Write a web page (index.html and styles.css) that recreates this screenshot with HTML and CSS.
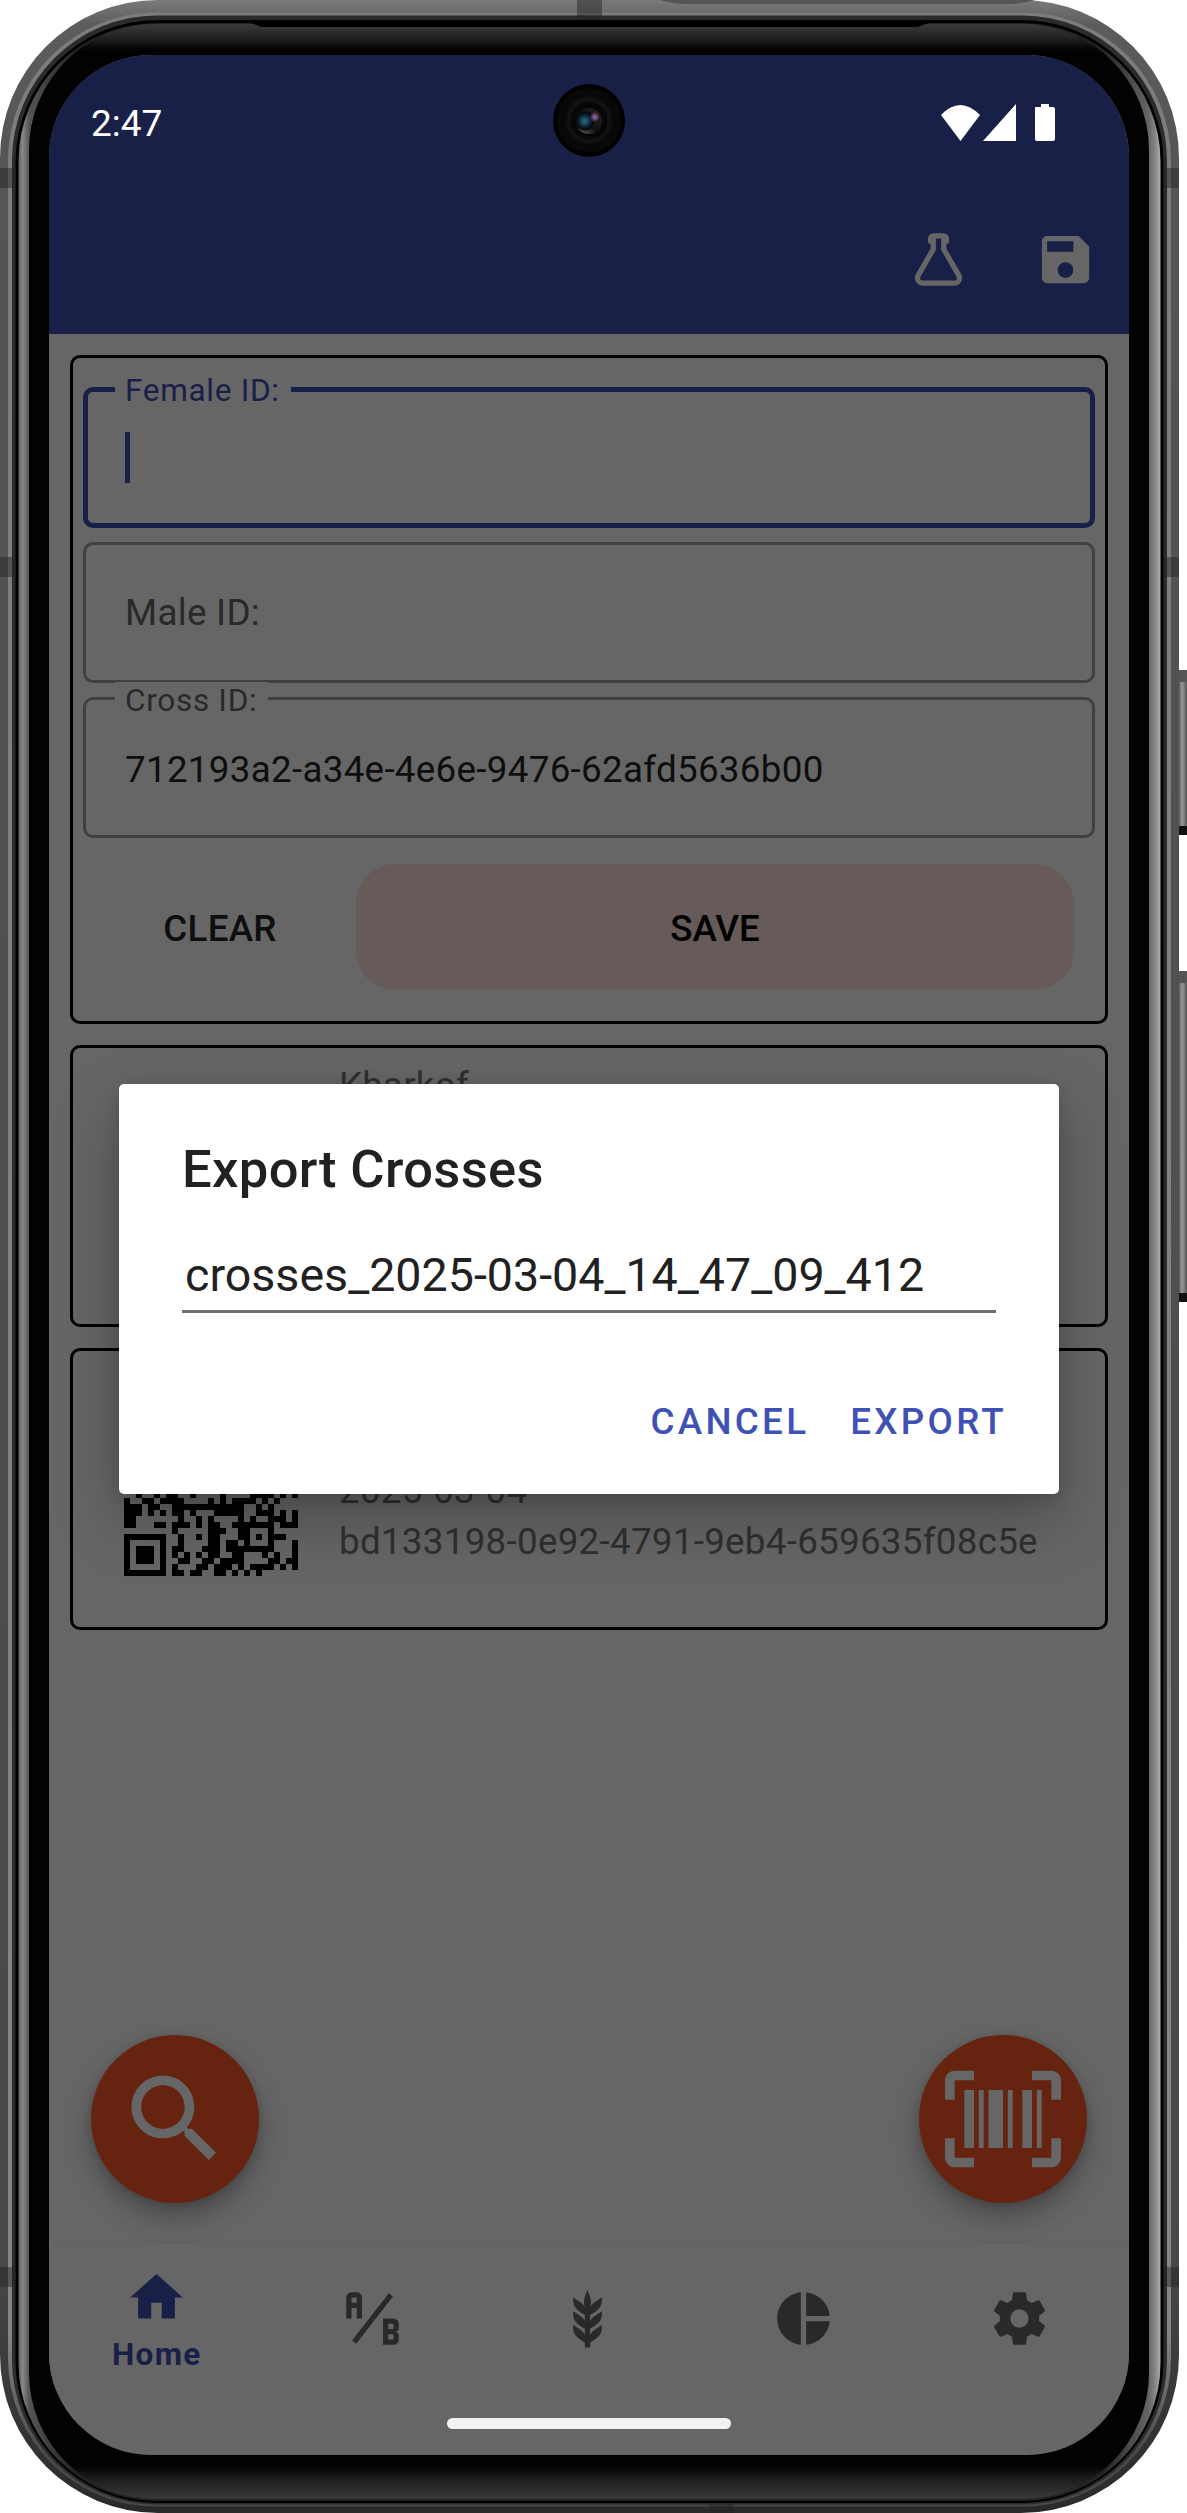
FILE: index.html
```html
<!DOCTYPE html>
<html lang="en">
<head>
<meta charset="utf-8">
<title>Crosses</title>
<link rel="stylesheet" href="styles.css">
</head>
<body>
<div class="device">
  <svg class="frame" viewBox="0 0 1187 2513" aria-hidden="true">
    <defs>
      <linearGradient id="shell" x1="0" y1="0" x2="0" y2="1">
        <stop offset="0" stop-color="#7a7a7a"/><stop offset=".01" stop-color="#5c5c5c"/><stop offset=".06" stop-color="#555"/><stop offset=".9" stop-color="#484848"/><stop offset="1" stop-color="#2a2a2a"/>
      </linearGradient>
      <linearGradient id="line" x1="0" y1="0" x2="0" y2="1">
        <stop offset="0" stop-color="#7c7c7c"/><stop offset=".93" stop-color="#868686"/><stop offset=".98" stop-color="#484848"/>
      </linearGradient>
      <linearGradient id="rim" x1="18" x2="1160" y1="0" y2="0" gradientUnits="userSpaceOnUse">
        <stop offset="0" stop-color="#5a5a5a"/><stop offset=".004" stop-color="#888"/><stop offset=".0098" stop-color="#555"/><stop offset=".05" stop-color="#222"/><stop offset=".95" stop-color="#222"/><stop offset=".9902" stop-color="#666"/><stop offset=".996" stop-color="#888"/><stop offset="1" stop-color="#aaa"/>
      </linearGradient>
      <linearGradient id="glass" x1="0" y1="24" x2="0" y2="2500" gradientUnits="userSpaceOnUse">
        <stop offset="0" stop-color="#3a3a3a"/><stop offset=".005" stop-color="#252525"/><stop offset=".0105" stop-color="#020202"/><stop offset=".986" stop-color="#020202"/><stop offset=".993" stop-color="#222"/><stop offset="1" stop-color="#3c3c3c"/>
      </linearGradient>
      <linearGradient id="key" x1="0" x2="1" y1="0" y2="0">
        <stop offset="0" stop-color="#333"/><stop offset=".5" stop-color="#999"/><stop offset="1" stop-color="#555"/>
      </linearGradient>
    </defs>
    <rect x="1177" y="670" width="10" height="165" fill="url(#key)"/>
    <rect x="1177" y="971" width="10" height="331" fill="url(#key)"/>
    <path d="M1179 670h8v12h-8zM1179 971h8v12h-8z" fill="#555"/>
    <path d="M1179 826h8v9h-8zM1179 1293h8v9h-8z" fill="#111"/>
    <rect x="0" y="0" width="1179" height="2513" rx="158" fill="url(#shell)"/>
    <path d="M660 0h375q-12 4-30 4H690q-18 0-30-4z" fill="#555"/>
    <rect x="8" y="12.500" width="1163" height="2494" rx="148" fill="url(#line)"/>
    <rect x="12" y="15.500" width="1155" height="2489" rx="145" fill="#2b2b2b"/>
    <rect x="15.500" y="20" width="1148" height="2483" rx="142" fill="#000"/>
    <rect x="18.500" y="23" width="1142" height="2478" rx="138" fill="url(#rim)"/>
    <rect x="29" y="24" width="1120" height="2475" rx="126" fill="url(#glass)"/>
    <path d="M248 22h683l-13 5H262z" fill="#000"/>
    <path d="M577 0h25v19h-25zM0 168h16v20H0zM1164 168h15v20h-15zM0 557h16v20H0zM1164 557h15v20h-15zM0 2267h16v20H0zM1164 2267h15v20h-15zM709 2504h25v9h-25z" fill="#222" opacity=".45"/>
  </svg>

  <main class="screen">
    <div class="statusbar">
      <span>2:47</span>
      <svg class="status-icons" viewBox="0 0 116 40">
        <path d="M0 12Q19-8 39 12L19.500 38zM42 38L75 1v37zM94 4h6V1h8v3h4q2 0 2 2v30q0 2-2 2H96q-2 0-2-2V6z" fill="#fff"/>
      </svg>
    </div>
    <header class="appbar">
      <svg class="icon" viewBox="0 0 24 24"><path d="M5,19A1,1 0 0,0 6,20H18A1,1 0 0,0 19,19C19,18.790 18.930,18.590 18.820,18.430L13,8.350V4H11V8.350L5.180,18.430C5.070,18.590 5,18.790 5,19M6,22A3,3 0 0,1 3,19C3,18.400 3.180,17.840 3.500,17.370L9,7.810V6A1,1 0 0,1 8,5V4A2,2 0 0,1 10,2H14A2,2 0 0,1 16,4V5A1,1 0 0,1 15,6V7.810L20.500,17.370C20.820,17.840 21,18.400 21,19A3,3 0 0,1 18,22H6Z"/></svg>
      <svg class="icon" viewBox="0 0 24 24"><path d="M15,9H5V5H15M12,19A3,3 0 0,1 9,16A3,3 0 0,1 12,13A3,3 0 0,1 15,16A3,3 0 0,1 12,19M17,3H5C3.890,3 3,3.900 3,5V19A2,2 0 0,0 5,21H19A2,2 0 0,0 21,19V7L17,3Z"/></svg>
    </header>

    <div class="content">
      <section class="card form">
        <div class="field focused"><label>Female ID:</label><i class="caret"></i></div>
        <div class="field"><span class="hint">Male ID:</span></div>
        <div class="field"><label>Cross ID:</label><span class="value">712193a2-a34e-4e6e-9476-62afd5636b00</span></div>
        <div class="actions">
          <button class="clear">CLEAR</button>
          <button class="save">SAVE</button>
        </div>
      </section>
      <section class="card cross">
        <div class="qr"></div>
        <div class="lines"><p>Kharkof</p></div>
      </section>
      <section class="card cross">
        <svg class="qr" viewBox="0 0 29 29" shape-rendering="crispEdges"><path stroke="#000" stroke-width="1" d="M2 15.500h1M5 15.500h1M7 15.500h2M11 15.500h1M16 15.500h1M21 15.500h4M26 15.500h1M28 15.500h1
M0 16.500h1M3 16.500h2M6 16.500h4M14 16.500h1M16 16.500h1M18 16.500h4M23 16.500h1M25 16.500h1
M0 17.500h2M2 17.500h1M4 17.500h2M8 17.500h9M17 17.500h3M22 17.500h1M24 17.500h1
M0 18.500h3M4 18.500h1M6 18.500h1M8 18.500h2M11 18.500h1M15 18.500h5M22 18.500h3M26 18.500h1M28 18.500h1
M0 19.500h2M9 19.500h1M12 19.500h1M14 19.500h1M19 19.500h1M21 19.500h1M24 19.500h3M28 19.500h1
M0 20.500h2M5 20.500h2M8 20.500h3M12 20.500h1M14 20.500h2M18 20.500h6M24 20.500h1M26 20.500h3
M8 21.500h1M14 21.500h3M19 21.500h2M24 21.500h1
M0 22.500h7M9 22.500h1M12 22.500h1M14 22.500h2M19 22.500h2M22 22.500h1M24 22.500h3
M0 23.500h1M6 23.500h1M9 23.500h1M14 23.500h2M17 23.500h2M20 23.500h1M24 23.500h1M28 23.500h1
M0 24.500h1M2 24.500h3M6 24.500h1M8 24.500h2M13 24.500h3M17 24.500h8M28 24.500h1
M0 25.500h1M2 25.500h3M6 25.500h1M8 25.500h1M10 25.500h1M12 25.500h1M14 25.500h2M18 25.500h2M23 25.500h1M25 25.500h1M28 25.500h1
M0 26.500h1M2 26.500h3M6 26.500h1M9 26.500h2M13 26.500h2M16 26.500h4M24 26.500h2M27 26.500h2
M0 27.500h1M6 27.500h1M8 27.500h1M12 27.500h2M15 27.500h3M19 27.500h1M21 27.500h4M26 27.500h1M28 27.500h1
M0 28.500h7M8 28.500h2M11 28.500h2M15 28.500h2M18 28.500h1M20 28.500h1M22 28.500h1"/></svg>
        <div class="lines"><p>&nbsp;</p><p>&nbsp;</p><p>2025-03-04</p><p>bd133198-0e92-4791-9eb4-659635f08c5e</p></div>
      </section>
    </div>

    <div class="fabs">
      <button class="fab"><svg viewBox="0 0 24 24"><path d="M15.500,14h-0.790l-0.280,-0.270C15.410,12.590 16,11.110 16,9.500 16,5.910 13.090,3 9.500,3S3,5.910 3,9.500 5.910,16 9.500,16c1.610,0 3.090,-0.590 4.230,-1.570l0.270,0.280v0.790l5,4.990L20.490,19l-4.990,-5zM9.500,14C7.010,14 5,11.990 5,9.500S7.010,5 9.500,5 14,7.010 14,9.500 11.990,14 9.500,14z"/></svg></button>
      <button class="fab"><svg viewBox="0 0 24 24"><path d="M4,6H6V18H4V6M7,6H8V18H7V6M9,6H12V18H9V6M13,6H14V18H13V6M16,6H18V18H16V6M19,6H20V18H19V6M2,4V8H0V4A2,2 0 0,1 2,2H6V4H2M22,2A2,2 0 0,1 24,4V8H22V4H18V2H22M2,16V20H6V22H2A2,2 0 0,1 0,20V16H2M22,20V16H24V20A2,2 0 0,1 22,22H18V20H22Z"/></svg></button>
    </div>

    <nav class="tabs">
      <a class="tab active"><svg class="icon" viewBox="0 0 24 24"><path d="M10,20V14H14V20H19V12H22L12,3L2,12H5V20H10Z"/></svg><span>Home</span></a>
      <a class="tab"><svg class="icon" viewBox="0 0 24 24"><path d="M4 2A2 2 0 0 0 2 4V12H4V8H6V12H8V4A2 2 0 0 0 6 2H4M4 4H6V6H4M22 15.500V14A2 2 0 0 0 20 12H16V22H20A2 2 0 0 0 22 20V18.500A1.540 1.540 0 0 0 20.500 17A1.540 1.540 0 0 0 22 15.500M20 20H18V18H20V20M20 16H18V14H20M5.790 21.610L4.210 20.390L18.210 2.390L19.790 3.610Z"/></svg></a>
      <a class="tab"><svg class="icon" viewBox="0 0 24 24"><path d="M7.330,18.330C6.500,17.170 6.500,15.830 6.500,14.500C8.170,15.500 9.830,16.500 10.670,17.670L11,18.230V15.950C9.500,15.050 8.080,14.130 7.330,13.080C6.500,11.920 6.500,10.580 6.500,9.250C8.170,10.250 9.830,11.250 10.670,12.420L11,13V10.700C9.500,9.800 8.080,8.880 7.330,7.830C6.500,6.670 6.500,5.330 6.500,4C8.170,5 9.830,6 10.670,7.170C10.770,7.310 10.860,7.460 10.940,7.620C10.770,7 10.660,6.420 10.650,5.820C10.640,4.310 11.300,2.760 11.960,1.210C12.650,2.690 13.340,4.180 13.350,5.690C13.360,6.320 13.250,6.960 13.070,7.590C13.150,7.450 13.230,7.310 13.330,7.170C14.170,6 15.830,5 17.500,4C17.500,5.330 17.500,6.670 16.670,7.830C15.920,8.880 14.500,9.800 13,10.700V13L13.330,12.420C14.170,11.250 15.830,10.250 17.500,9.250C17.500,10.580 17.500,11.920 16.670,13.080C15.920,14.130 14.500,15.050 13,15.950V18.230L13.330,17.670C14.170,16.500 15.830,15.500 17.500,14.500C17.500,15.830 17.500,17.170 16.670,18.330C15.920,19.380 14.500,20.300 13,21.200V23H11V21.200C9.500,20.300 8.080,19.380 7.330,18.330Z"/></svg></a>
      <a class="tab"><svg class="icon" viewBox="0 0 24 24"><path d="M11,2V22C5.900,21.500 2,17.200 2,12C2,6.800 5.900,2.500 11,2M13,2V11H22C21.500,6.200 17.800,2.500 13,2M13,13V22C17.700,21.500 21.500,17.800 22,13H13Z"/></svg></a>
      <a class="tab"><svg class="icon" viewBox="0 0 24 24"><path d="M12,15.500A3.500,3.500 0 0,1 8.500,12A3.500,3.500 0 0,1 12,8.500A3.500,3.500 0 0,1 15.500,12A3.500,3.500 0 0,1 12,15.500M19.430,12.970C19.470,12.650 19.500,12.330 19.500,12C19.500,11.670 19.470,11.340 19.430,11L21.540,9.370C21.730,9.220 21.780,8.950 21.660,8.730L19.660,5.270C19.540,5.050 19.270,4.960 19.050,5.050L16.560,6.050C16.040,5.660 15.500,5.320 14.870,5.070L14.500,2.420C14.460,2.180 14.250,2 14,2H10C9.750,2 9.540,2.180 9.500,2.420L9.130,5.070C8.500,5.320 7.960,5.660 7.440,6.050L4.950,5.050C4.730,4.960 4.460,5.050 4.340,5.270L2.340,8.730C2.210,8.950 2.270,9.220 2.460,9.370L4.570,11C4.530,11.340 4.500,11.670 4.500,12C4.500,12.330 4.530,12.650 4.570,12.970L2.460,14.630C2.270,14.780 2.210,15.050 2.340,15.270L4.340,18.730C4.460,18.950 4.730,19.030 4.950,18.950L7.440,17.940C7.960,18.340 8.500,18.680 9.130,18.930L9.500,21.580C9.540,21.820 9.750,22 10,22H14C14.250,22 14.460,21.820 14.500,21.580L14.870,18.930C15.500,18.670 16.040,18.340 16.560,17.940L19.050,18.950C19.270,19.030 19.540,18.950 19.660,18.730L21.660,15.270C21.780,15.050 21.730,14.780 21.540,14.630L19.430,12.970Z"/></svg></a>
    </nav>
    <div class="gesture"></div>

    <div class="camera"><i></i></div>
    <div class="dialog">
      <h1>Export Crosses</h1>
      <div class="filename">crosses_2025-03-04_14_47_09_412</div>
      <div class="dialog-actions"><button>CANCEL</button><button>EXPORT</button></div>
    </div>
  </main>
</div>
</body>
</html>
```
FILE: styles.css
```css
* { box-sizing: border-box; }
body { margin: 0; background: #fff; font-family: Roboto, sans-serif; }
p, h1 { margin: 0; }
button { border: 0; padding: 0; background: none; font: inherit; color: inherit; letter-spacing: inherit; }
svg { display: block; }

.device { position: relative; width: 1187px; height: 2513px; padding: 55px 58px 58px 49px; overflow: hidden; }
.frame { position: absolute; left: 0; top: 0; width: 1187px; height: 2513px; }
.screen { position: relative; width: 1080px; height: 2400px; border-radius: 102px; overflow: hidden; background: #666; display: flex; flex-direction: column; }

.statusbar { height: 132px; flex: none; background: #192048; color: #fff; display: flex; justify-content: space-between; padding: 47px 72px 0 42px; font-size: 37px; line-height: 43px; }
.status-icons { width: 116px; height: 40px; margin-top: 1px; }
.appbar { height: 147px; flex: none; background: #192048; display: flex; justify-content: flex-end; align-items: flex-start; gap: 64px; padding: 41px 32px 0 0; }
.icon { width: 63px; height: 63px; flex: none; fill: currentColor; }
.appbar .icon { fill: #666; }

.content { flex: 1; padding: 21px; display: flex; flex-direction: column; gap: 21px; }
.card { border: 3px solid #000; border-radius: 10px; }
.form { height: 669px; padding: 29px 10px 0; display: flex; flex-direction: column; gap: 14px; }
.field { position: relative; height: 141px; border: 3px solid #404040; border-radius: 10px; padding: 0 39px; display: flex; align-items: center; font-size: 36.75px; letter-spacing: .3px; color: #292929; }
.field.focused { border: 5px solid #192048; padding: 0 37px; color: #192048; }
.field label { position: absolute; left: 29px; top: -18px; padding: 0 11px 0 10px; background: #666; font-size: 31.5px; line-height: 37px; letter-spacing: .7px; white-space: nowrap; }
.field.focused label { left: 27px; top: -20px; }
.caret { width: 5px; height: 51px; background: #192048; }
.field .value { color: #0e0e0e; padding-top: 3px; }
.actions { display: flex; gap: 61px; margin-top: 12px; padding-right: 21px; height: 126px; font-size: 36.75px; font-weight: 500; }
.clear { width: 211px; margin-left: 1px; padding: 2px 0 0 61px; letter-spacing: .3px; color: #0e0e0e; }
.save { flex: 1; padding-top: 2px; background: #665b59; border-radius: 39px; color: #000; }
.cross { height: 282px; padding: 17px 0 0 51px; display: flex; gap: 41px; }
.qr { width: 174px; height: 174px; margin-top: 34px; flex: none; }
.lines { color: #303030; font-size: 36.75px; line-height: 51px; letter-spacing: .28px; white-space: nowrap; margin-top: -5px; }

.fabs { display: flex; justify-content: space-between; padding: 0 42px; margin-bottom: 41px; flex: none; }
.fab { width: 168px; height: 168px; border-radius: 50%; background: #662410; display: grid; place-items: center; box-shadow: 0 14px 28px rgba(0,0,0,.28), 0 2px 8px rgba(0,0,0,.15); }
.fab svg { width: 116px; height: 116px; fill: #666; }
.tabs { height: 147px; flex: none; display: flex; padding-right: 2px; background: #666; box-shadow: 0 -1px 3px rgba(0,0,0,.06); }
.tab { flex: 1; display: flex; flex-direction: column; align-items: center; justify-content: center; padding-top: 2px; color: #292929; }
.tab.active { color: #192048; justify-content: flex-start; padding-top: 22px; }
.tab span { font-size: 31.5px; font-weight: 700; line-height: 37px; margin-top: 7px; letter-spacing: 1.3px; }
.gesture { width: 284px; height: 11px; flex: none; margin: 27px auto 26px; border-radius: 6px; background: #f2f2f2; }

.camera { position: absolute; left: 504px; top: 29px; width: 72px; height: 73px; border-radius: 50%; background: radial-gradient(circle, #060606 0 18px, #111 19px 22px, #080808 24px 31px, #000 33px); display: grid; place-items: center; }
.camera i { width: 26px; height: 26px; border-radius: 50%; background: radial-gradient(circle at 72% 35%, #8b629a 0 1px, transparent 5px), radial-gradient(circle at 34% 50%, #27637c 0 1px, #0b1520 7px, #05060c 9px, transparent 10px), linear-gradient(50deg, #777, #111 45%, #222); }

.dialog { position: absolute; left: 70px; top: 1029px; width: 940px; height: 410px; padding: 51px 52px 0 63px; background: #fff; border-radius: 5px; color: #212121; box-shadow: 0 26px 64px rgba(0,0,0,.26), 0 4px 18px rgba(0,0,0,.14); }
.dialog h1 { font-size: 52.5px; font-weight: 500; line-height: 68px; letter-spacing: .36px; }
.filename { width: 814px; height: 81px; margin-top: 29px; padding: 12px 0 0 3px; border-bottom: 3px solid #707070; font-size: 46.6px; line-height: 62px; }
.dialog-actions { display: flex; justify-content: flex-end; gap: 41px; margin-top: 87px; font-size: 36.75px; line-height: 44px; font-weight: 500; letter-spacing: 3.28px; color: #3f51b5; }
```
